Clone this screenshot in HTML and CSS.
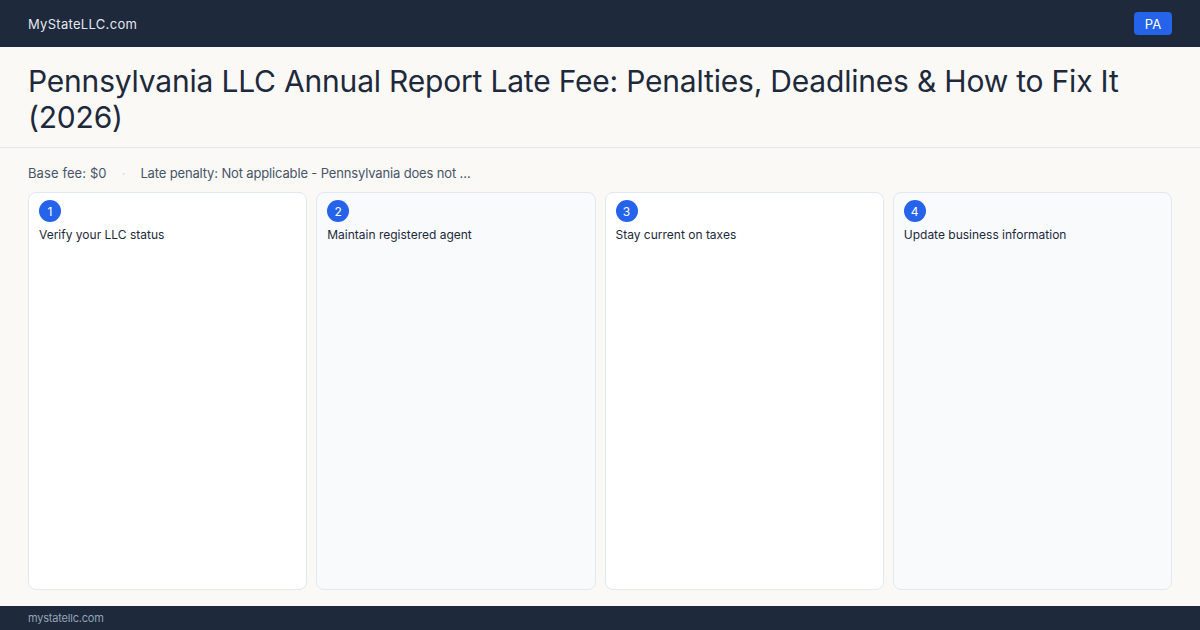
FILE: index.html
```html
<!DOCTYPE html>
<html>
<head>
<meta charset="utf-8">
<link rel="stylesheet" href="styles.css">
</head>
<body>
<div class="page">
  <header class="topbar">
    <div class="brand">MyStateLLC.com</div>
    <div class="state">PA</div>
  </header>
  <section class="hero">
    <h1>Pennsylvania LLC Annual Report Late Fee: Penalties, Deadlines &amp; How to Fix It (2026)</h1>
  </section>
  <main class="content">
    <div class="meta">
      <span class="fee">Base fee: $0</span>
      <span class="dot">·</span>
      <span class="penalty">Late penalty: Not applicable - Pennsylvania does not …</span>
    </div>
    <div class="cards">
      <div class="card"><div class="num">1</div><div class="label">Verify your LLC status</div></div>
      <div class="card alt"><div class="num">2</div><div class="label">Maintain registered agent</div></div>
      <div class="card"><div class="num">3</div><div class="label">Stay current on taxes</div></div>
      <div class="card alt"><div class="num">4</div><div class="label">Update business information</div></div>
    </div>
  </main>
  <footer class="foot">mystatellc.com</footer>
</div>
</body>
</html>
```
FILE: styles.css
```css
* { box-sizing: border-box; }
html, body { margin: 0; padding: 0; }
body {
  width: 1200px;
  height: 630px;
  font-family: Inter, "Noto Sans", sans-serif;
  background: #faf9f6;
  overflow: hidden;
}
.page { display: flex; flex-direction: column; height: 630px; }
.topbar {
  height: 47px;
  background: #1e293b;
  display: flex;
  align-items: center;
  justify-content: space-between;
  padding: 0 28px;
}
.brand { color: #e2e8f0; font-size: 13px; letter-spacing: 0.3px; }
.state {
  background: #2563eb;
  color: #fff;
  font-size: 13px;
  height: 23px;
  width: 38px;
  border-radius: 4px;
  display: flex;
  align-items: center;
  justify-content: center;
}
.hero {
  height: 101px;
  border-bottom: 1px solid #e5e7eb;
  padding: 16px 28px 0;
}
.hero h1 {
  margin: 0;
  font-weight: 400;
  font-size: 30px;
  line-height: 36px;
  color: #1e293b;
  letter-spacing: -0.2px;
}
.content {
  flex: 1;
  padding: 16px 28px 16px;
  display: flex;
  flex-direction: column;
}
.meta {
  font-size: 13px;
  color: #475569;
  display: flex;
  gap: 15px;
  height: 18px;
  align-items: center;
}
.meta .fee { letter-spacing: 0.1px; }
.meta .penalty { letter-spacing: -0.15px; }
.meta .dot { color: #cbd5e1; }
.cards {
  margin-top: 10px;
  flex: 1;
  display: grid;
  grid-template-columns: repeat(4, 1fr);
  gap: 9px;
}
.card {
  background: #fff;
  border: 1px solid #e2e8f0;
  border-radius: 8px;
  padding: 7px 10px;
}
.card.alt { background: #f8fafc; }
.num {
  width: 22px;
  height: 22px;
  border-radius: 50%;
  background: #2563eb;
  color: #fff;
  font-size: 12px;
  display: flex;
  align-items: center;
  justify-content: center;
}
.label {
  margin-top: 5px;
  font-size: 12px;
  color: #1e293b;
}
.foot {
  height: 24px;
  background: #1e293b;
  color: #94a3b8;
  font-size: 11px;
  letter-spacing: -0.2px;
  padding: 0 28px;
  display: flex;
  align-items: center;
}
```
